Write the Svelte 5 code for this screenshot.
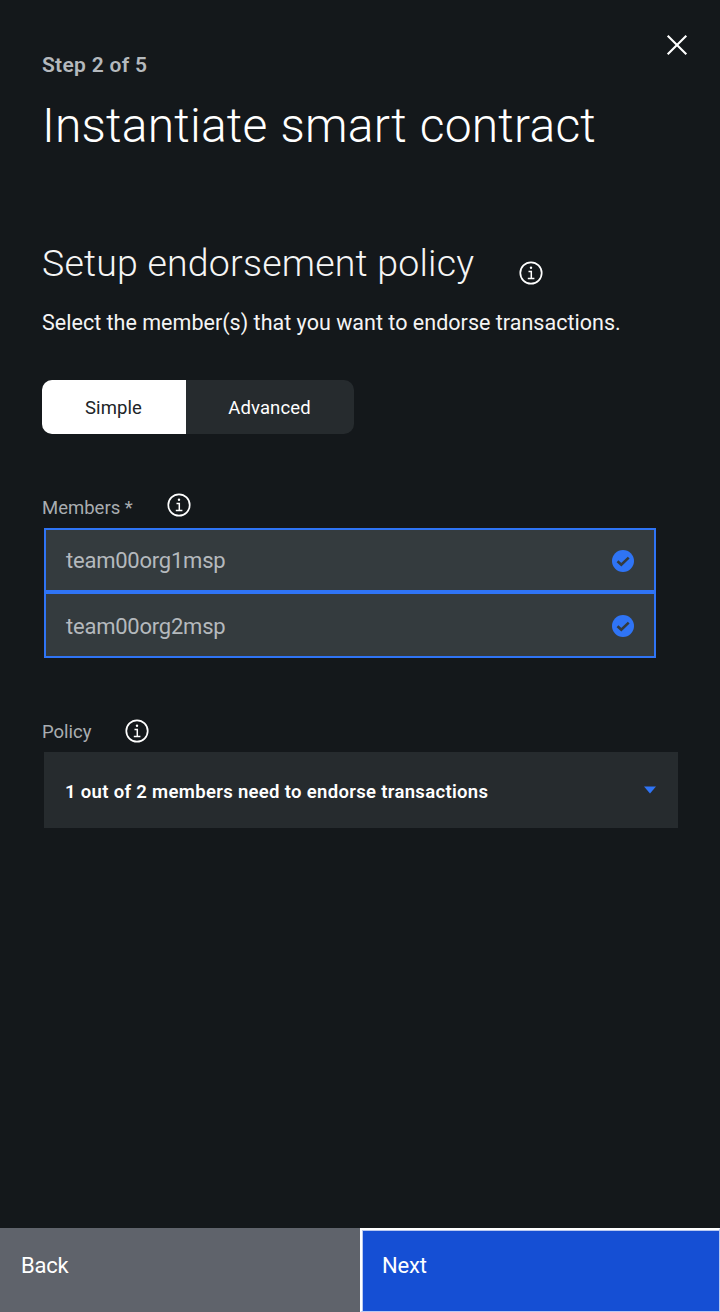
<script>
  const members = ['team00org1msp', 'team00org2msp'];
</script>

{#snippet info()}
  <svg class="info" width="24" height="24" viewBox="0 0 24 24" fill="none" stroke="#fff">
    <circle cx="12" cy="12" r="10.7" stroke-width="1.7" />
    <path d="M9.5 10.4H12.3V17.2M8.8 17.4H15.4" stroke-width="1.5" />
    <circle cx="12" cy="6.7" r="1.2" fill="#fff" stroke="none" />
  </svg>
{/snippet}

<div class="panel">
  <button class="close" aria-label="Close">
    <svg width="22" height="22" viewBox="0 0 22 22"><path d="M1.7 1.7 20.3 20.3M20.3 1.7 1.7 20.3" stroke="#fff" stroke-width="2.1" /></svg>
  </button>
  <main>
    <p class="step">Step 2 of 5</p>
    <h1>Instantiate smart contract</h1>
    <div class="heading">
      <h2>Setup endorsement policy</h2>
      {@render info()}
    </div>
    <p class="desc">Select the member(s) that you want to endorse transactions.</p>
    <div class="switcher">
      <button class="selected">Simple</button>
      <button class="adv">Advanced</button>
    </div>
    <div class="label members-label"><span>Members *</span>{@render info()}</div>
    <ul>
      {#each members as member}
        <li>
          <span>{member}</span>
          <svg width="22" height="22" viewBox="0 0 22 22">
            <circle cx="11" cy="11" r="11" fill="#2f74f5" />
            <path d="M5.5 11.2 9.3 14.8 16.7 7.6" fill="none" stroke="#343b3e" stroke-width="2.6" />
          </svg>
        </li>
      {/each}
    </ul>
    <div class="label policy-label"><span>Policy</span>{@render info()}</div>
    <div class="dropdown">
      <span>1 out of 2 members need to endorse transactions</span>
      <svg width="12" height="8" viewBox="0 0 12 8"><path d="M0 .6H12L6 7.4Z" fill="#2f74f5" /></svg>
    </div>
  </main>
  <footer>
    <button class="back"><span>Back</span></button>
    <button class="next"><span>Next</span></button>
  </footer>
</div>

<style>
  :global(body) { margin: 0; background: #14181b; }
  .panel {
    box-sizing: border-box;
    position: relative;
    display: flex;
    flex-direction: column;
    width: 720px;
    height: 1312px;
    background: #14181b;
    color: #fff;
    font-family: Roboto, sans-serif;
    font-size: 22px;
    white-space: nowrap;
  }
  * { box-sizing: border-box; }
  p, h1, h2, ul { margin: 0; padding: 0; }
  svg { display: block; flex: none; }
  button { border: 0; padding: 0; font: inherit; color: inherit; background: none; }
  .close { position: absolute; left: 666px; top: 34px; }
  main { flex: 1; padding: 51px 42px 0; }
  .step { line-height: 28px; font-weight: 600; font-size: 21px; color: #b5b9bd; letter-spacing: 0.3px; }
  h1 { margin-top: 17px; line-height: 60px; font-size: 48px; font-weight: 300; letter-spacing: 0.2px; word-spacing: 1px; }
  .heading { display: flex; margin-top: 83px; }
  h2 { width: 477px; line-height: 48px; font-size: 37.5px; font-weight: 300; color: #f5f5f5; letter-spacing: 0.2px; }
  .heading .info { margin-top: 22px; }
  .desc { margin-top: 22px; line-height: 28px; font-size: 21.5px; color: #f4f4f4; letter-spacing: 0.02px; }
  .switcher { display: flex; width: 312px; height: 54px; margin-top: 43px; border-radius: 10px; overflow: hidden; background: #262b2e; font-size: 18.5px; }
  .switcher button { padding: 2px 1px 0 0; letter-spacing: 0.1px; }
  .selected { width: 144px; background: #fff; color: #202427; }
  .adv { width: 168px; }
  .label { display: flex; height: 26px; font-size: 18.5px; line-height: 26px; color: #a9adb1; }
  .members-label { margin-top: 58px; height: 36px; }
  .members-label span { width: 125px; padding-top: 3px; }
  .members-label .info { margin-top: 1px; }
  ul { display: flex; flex-direction: column; width: 612px; margin-left: 2px; list-style: none; }
  li { display: flex; align-items: center; justify-content: space-between; height: 64px; padding: 2px 20px 0; border: 2px solid #2f74f5; background: #343b3e; color: #b4b9bd; letter-spacing: -0.23px; }
  li:first-child span { padding-bottom: 2px; }
  li:last-child { height: 66px; }
  .policy-label { margin-top: 60px; height: 34px; }
  .policy-label span { width: 83px; padding-top: 1px; }
  .policy-label .info { margin-top: 1px; }
  .dropdown { display: flex; align-items: center; justify-content: space-between; width: 634px; height: 76px; margin-left: 2px; padding: 0 22px 0 21px; background: #262b2e; font-size: 18.5px; font-weight: 600; letter-spacing: 0.32px; }
  .dropdown span { padding-top: 3px; }
  footer { display: flex; height: 84px; }
  footer button { display: flex; width: 360px; line-height: 28px; text-align: left; letter-spacing: -0.2px; }
  .back { padding: 24px 21px; background: #5f636b; }
  .next { padding: 22px 20px; background: #154fd4; border-style: solid; border-color: #fff #b9c9f1 #b9c9f1 #fff; border-width: 2px 1px 1px 2px; box-shadow: inset 1px 1px #b9c9f1; }
</style>
